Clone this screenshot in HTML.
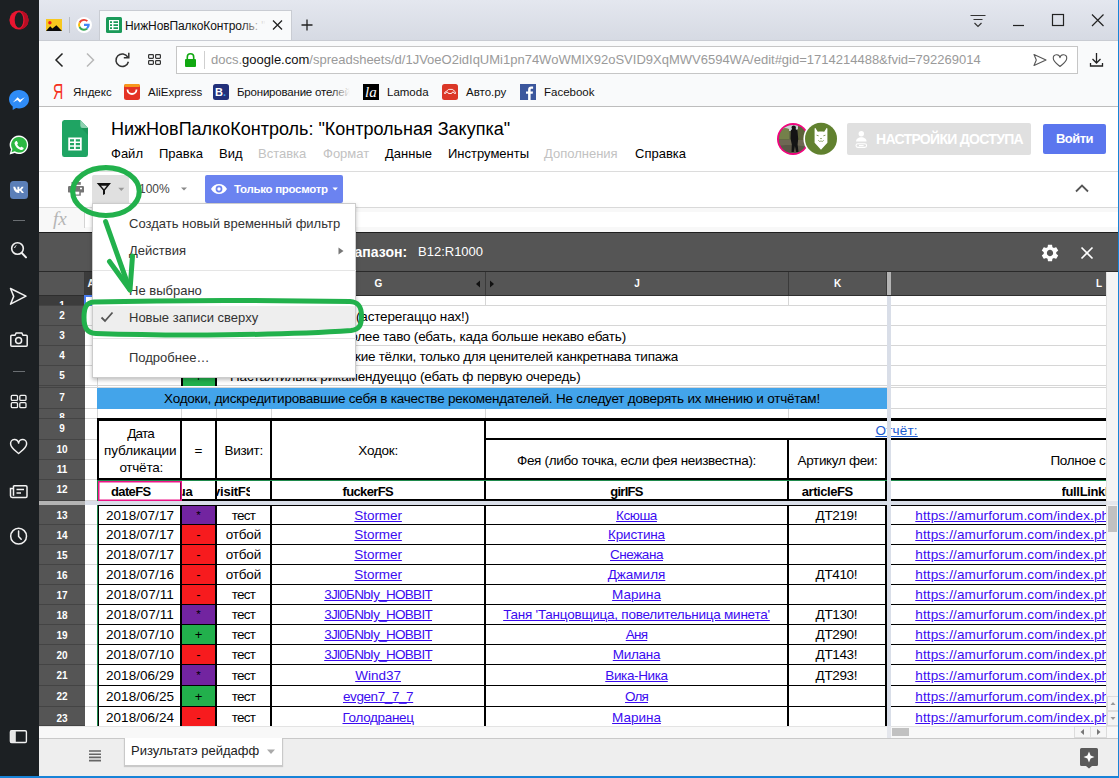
<!DOCTYPE html>
<html lang="ru"><head><meta charset="utf-8"><title>НижНовПалкоКонтроль: "Контрольная Закупка"</title>
<style>
*{box-sizing:border-box;margin:0;padding:0}
html,body{width:1119px;height:778px;overflow:hidden;background:#fff}
body{position:relative;font-family:"Liberation Sans",sans-serif;font-size:13px;color:#000}
.abs{position:absolute}
svg{position:absolute;overflow:visible}
/* sidebar */
#side{position:absolute;left:0;top:0;width:39px;height:778px;background:#1c2023}
/* tab bar */
#tabbar{position:absolute;left:39px;top:0;width:1080px;height:40px;background:linear-gradient(#e4e7ef,#d6dae3)}
#tab{position:absolute;left:99px;top:10px;width:193px;height:31px;background:#f9fafb;border:1px solid #c9ccd3;border-bottom:none}
#tabtitle{position:absolute;left:125px;top:17px;width:140px;height:18px;font-size:12px;letter-spacing:-.1px;line-height:18px;color:#111;white-space:nowrap;overflow:hidden}
#tabfade{position:absolute;left:240px;top:14px;width:26px;height:24px;background:linear-gradient(90deg,rgba(249,250,251,0),#f9fafb)}
#navrow{position:absolute;left:39px;top:40px;width:1080px;height:37px;background:#f9fafb;border-top:1px solid #c9ccd3}
#addr{position:absolute;left:176px;top:46px;width:902px;height:28px;background:#fff;border:1px solid #c6c6c6}
#url{position:absolute;left:211px;top:50px;height:20px;line-height:20px;font-size:13px;color:#9a9a9a;white-space:nowrap}
#url b{font-weight:normal;color:#111}
#bm{position:absolute;left:39px;top:77px;width:1080px;height:30px;background:#f9fafb;border-bottom:1px solid #bdbdbd}
.bmt{position:absolute;top:83px;height:18px;line-height:18px;font-size:11.5px;color:#111;white-space:nowrap}
/* docs */
#title{position:absolute;left:111px;top:118px;height:22px;line-height:22px;font-size:18px;color:#000;white-space:nowrap}
.menu{position:absolute;top:145px;height:17px;line-height:17px;font-size:13px;color:#000;white-space:nowrap}
.menu.dis{color:#c2c2c2}
#hdrline{position:absolute;left:39px;top:171px;width:1080px;height:1px;background:#dcdcdc}
#tbline{position:absolute;left:39px;top:207px;width:1080px;height:1px;background:#d9d9d9}
#fbar{position:absolute;left:39px;top:208px;width:1080px;height:24px;background:#f8f8f8}
#fx{position:absolute;left:53px;top:208px;font-family:"Liberation Serif",serif;font-style:italic;font-size:19px;line-height:22px;color:#b5b5b5}
#share{position:absolute;left:847px;top:123px;width:184px;height:32px;background:#e0e0e0;border-radius:2px;color:#fff;font-weight:bold;font-size:14px;letter-spacing:-.7px;line-height:32px;white-space:nowrap}
#login{position:absolute;left:1043px;top:124px;width:63px;height:30px;background:#5b76ee;border-radius:2px;color:#fff;font-weight:bold;font-size:13px;letter-spacing:-.5px;line-height:30px;text-align:center}
#viewbtn{position:absolute;left:205px;top:175px;width:138px;height:28px;background:#6b83f0;border-radius:2px;color:#fff;font-weight:bold;font-size:11.5px;letter-spacing:-.3px;line-height:28px;white-space:nowrap}
#filtbtn{position:absolute;left:92px;top:175px;width:37px;height:28px;background:#e0e0e0;border-radius:2px 2px 0 0}
/* filter bar & headers */
#filterbar{position:absolute;left:39px;top:232px;width:1080px;height:40px;background:#555;border-top:1px solid #1f1f1f;border-bottom:1px solid #2a2a2a}
#colhdr{position:absolute;left:39px;top:272px;width:1067px;height:24px;background:#555}
.ch{position:absolute;top:272px;height:23px;line-height:23px;font-size:10px;font-weight:bold;color:#fff;text-align:center;border-right:1px solid #3a3a3a}
.rh{position:absolute;left:39px;width:46px;background:#555;color:#fff;font-size:10px;font-weight:bold;text-align:center;border-bottom:1px solid #444;overflow:hidden}
/* grid */
#grid{position:absolute;left:85px;top:296px;width:1021px;height:430px;background:#fff;overflow:hidden}
.hl{position:absolute;height:1px;background:#d4d4d4}
.vl{position:absolute;width:1px;background:#d4d4d4}
.bk{position:absolute;background:#000}
.c{position:absolute;font-size:13px;white-space:nowrap;text-align:center;color:#000;overflow:hidden}
.c a,.lnk{color:#3b0bf0;text-decoration:underline}
.cb{font-weight:bold}
/* menu */
#dd{position:absolute;left:92px;top:203px;width:264px;height:175px;background:#fff;border:1px solid #ccc;box-shadow:0 2px 4px rgba(0,0,0,.25)}
.mi{position:absolute;left:36px;height:17px;line-height:17px;font-size:13px;color:#333;white-space:nowrap}
/* bottom */
#hscroll{position:absolute;left:39px;top:726px;width:1080px;height:12px;background:#f8f8f8}
#bottom{position:absolute;left:39px;top:738px;width:1080px;height:40px;background:#eee;border-top:1px solid #c9c9c9}
#sheettab{position:absolute;left:124px;top:738px;width:159px;height:28px;background:#fff;border:1px solid #c9c9c9;border-top:none;box-shadow:0 1px 1px rgba(0,0,0,.15);font-size:13px;line-height:26px;color:#222;white-space:nowrap}
#winb{position:absolute;left:0;top:776px;width:1119px;height:2px;background:#1883d7}
#winr{position:absolute;left:1118px;top:0;width:1px;height:778px;background:#1883d7}

</style></head>
<body>
<!-- Opera sidebar -->
<div id="side">
<svg width="39" height="778" viewBox="0 0 39 778" fill="none">
 <!-- opera -->
 <circle cx="19" cy="20" r="9.600" fill="#ea1530"/>
 <path d="M19 10.400a9.600 9.600 0 0 1 0 19.200c3.500-1.500 5.500-5 5.500-9.600s-2-8.100-5.500-9.600z" fill="#b50d24"/>
 <ellipse cx="19" cy="20" rx="4.300" ry="7.700" fill="#1c2023"/>
 <!-- messenger -->
 <path d="M19 90c-5.6 0-10 4.1-10 9.3 0 2.9 1.4 5.4 3.7 7.100v3.600l3.400-1.900c.9.300 1.900.400 2.900.400 5.600 0 10-4.100 10-9.300S24.600 90 19 90z" fill="#2f8cf7"/>
 <path d="M12.800 102.400l4.800-5.100 2.600 2.500 4.600-2.500-4.800 5.100-2.600-2.500z" fill="#fff"/>
 <!-- whatsapp -->
 <path d="M19 135.500a9.300 9.300 0 0 0-8 14l-1.400 4.900 5.100-1.300A9.300 9.300 0 1 0 19 135.500z" fill="#fff"/>
 <path d="M19 137a7.800 7.800 0 0 0-6.600 12l-.9 3.200 3.300-.9A7.800 7.800 0 1 0 19 137z" fill="#2cb742"/>
 <path d="M15.800 141.300c.5-.5 1.100-.3 1.300.1l.8 1.600c.1.400 0 .7-.3 1l-.4.500c.7 1.400 1.700 2.400 3.100 3.100l.6-.6c.3-.3.700-.3 1-.1l1.500.9c.4.300.4.800.1 1.200-.7.900-1.600 1.300-2.700 1-3-.8-5.500-3.200-6.200-6.200-.2-1 .3-1.800 1.200-2.500z" fill="#fff"/>
 <!-- vk -->
 <rect x="10" y="181" width="18" height="18" rx="3.500" fill="#5b7fb8"/>
 <path d="M13.200 186.800h2c.6 1.600 1.400 3 2.200 3.300v-3.300h1.900v2.400c.9-.2 1.700-1.300 2.300-2.400h1.900c-.4 1.400-1.300 2.500-2.200 3.200 1 .6 2 1.600 2.600 3h-2.100c-.5-1.100-1.400-2-2.500-2.200v2.200h-.9c-2.900 0-4.600-2.200-5.200-6.200z" fill="#fff"/>
 <!-- sep -->
 <rect x="13" y="220" width="12" height="1" fill="#6a6e72"/>
 <!-- search -->
 <circle cx="17.500" cy="248.500" r="5.800" stroke="#f2f2f2" stroke-width="1.600"/>
 <path d="M21.800 253l4.200 4.400" stroke="#f2f2f2" stroke-width="2" stroke-linecap="round"/>
 <path d="M14.600 248a3 3 0 0 1 1.800-2.500" stroke="#f2f2f2" stroke-width="1"/>
 <!-- send -->
 <path d="M10.500 288.500l15.500 7.700-15.500 8 3.200-7.800z" stroke="#f2f2f2" stroke-width="1.500" stroke-linejoin="round"/>
 <!-- camera -->
 <path d="M11.800 335.300h3.200l1.200-2.300h5.600l1.200 2.300h3.200c.6 0 1 .4 1 1v9c0 .6-.4 1-1 1H11.800c-.6 0-1-.4-1-1v-9c0-.6.4-1 1-1z" stroke="#f2f2f2" stroke-width="1.500"/>
 <circle cx="18.600" cy="340.600" r="3" stroke="#f2f2f2" stroke-width="1.500"/>
 <!-- sep -->
 <rect x="13" y="371" width="12" height="1" fill="#6a6e72"/>
 <!-- speed dial -->
 <g stroke="#f2f2f2" stroke-width="1.300">
 <rect x="11.300" y="395.400" width="6.200" height="5" rx="1"/><rect x="19.800" y="395.400" width="6.200" height="5" rx="1"/>
 <rect x="11.300" y="402.700" width="6.200" height="5" rx="1"/><rect x="19.800" y="402.700" width="6.200" height="5" rx="1"/>
 </g>
 <!-- heart -->
 <path d="M18.600 453.500c-4-3.300-8-6-8-9.600a4 4 0 0 1 8-.8 4 4 0 0 1 8 .8c0 3.600-4 6.300-8 9.600z" stroke="#f2f2f2" stroke-width="1.500" stroke-linejoin="round"/>
 <!-- news -->
 <path d="M13.500 485.700h12.300c.7 0 1.200.5 1.200 1.200v9.300c0 .7-.5 1.200-1.200 1.200H12.200c-1 0-1.700-.8-1.700-1.700v-7.200h3" stroke="#f2f2f2" stroke-width="1.500"/>
 <path d="M13.500 485.700v10.100" stroke="#f2f2f2" stroke-width="1.500"/>
 <path d="M16.500 489.500h7.500M16.500 493h4.500" stroke="#f2f2f2" stroke-width="1.500"/>
 <!-- clock -->
 <circle cx="18.600" cy="536.200" r="7.900" stroke="#f2f2f2" stroke-width="1.500"/>
 <path d="M18.600 531v5.500l2.600 2.800" stroke="#f2f2f2" stroke-width="1.500" stroke-linecap="round"/>
 <!-- toggle -->
 <rect x="10.400" y="730.700" width="16" height="11.800" rx="1.200" stroke="#f2f2f2" stroke-width="1.400"/>
 <rect x="10.400" y="730.700" width="5.400" height="11.800" fill="#e6e6e6"/>
</svg>
</div>

<!-- tab bar -->
<div id="tabbar"></div>
<div id="tab"></div>
<svg style="left:39px;top:0" width="1080" height="40" viewBox="39 0 1080 40" fill="none">
 <!-- pinned: picture icon -->
 <rect x="46" y="19" width="16" height="12" fill="#f7c81e"/>
 <path d="M46 31l4.200-4.700 2.200 2.100 4-3.100 5.600 5.700z" fill="#0a0a0a"/>
 <circle cx="49.900" cy="22.800" r="1.700" fill="#ee1c1c"/>
 <rect x="69" y="17" width="1" height="16" fill="#b9bcc4"/>
 <!-- google G -->
 <circle cx="84" cy="25" r="8" fill="#fff"/>
 <g transform="translate(84 24.800) scale(.84) translate(-84 -25)">
 <path d="M84 20.300c1.300 0 2.400.5 3.200 1.200l1.600-1.600A6.800 6.800 0 0 0 84 18a7 7 0 0 0-6.200 3.800l1.900 1.500A4.700 4.700 0 0 1 84 20.300z" fill="#ea4335"/>
 <path d="M79.300 25c0-.6.100-1.200.4-1.700l-1.900-1.500a7 7 0 0 0 0 6.400l1.900-1.500c-.3-.5-.4-1.100-.4-1.700z" fill="#fbbc05"/>
 <path d="M84 29.700c-2 0-3.700-1.300-4.300-3l-1.900 1.500A7 7 0 0 0 84 32c1.800 0 3.400-.6 4.600-1.700l-1.800-1.500c-.7.600-1.700.9-2.800.9z" fill="#34a853"/>
 <path d="M90.800 25c0-.5 0-.9-.1-1.300H84v2.600h3.800c-.2.900-.6 1.600-1.300 2.100l1.800 1.500c1.500-1.300 2.500-3 2.500-4.900z" fill="#4285f4"/>
 </g>
 <!-- sheets favicon -->
 <rect x="106" y="17" width="16" height="16" rx="1.500" fill="#1b9a59"/>
 <path d="M109 20h10v10.200h-10z" fill="#fff"/>
 <path d="M110 21.300h2v1.700h-2zM113.500 21.300h4.500v1.700h-4.500zM110 24.300h2v1.700h-2zM113.500 24.300h4.500v1.700h-4.500zM110 27.300h2v1.700h-2zM113.500 27.300h4.500v1.700h-4.500z" fill="#1b9a59"/>
 <!-- close x -->
 <path d="M273 20.500l9 9M282 20.500l-9 9" stroke="#222" stroke-width="1.300"/>
 <!-- plus -->
 <path d="M307 19.500v11M301.500 25h11" stroke="#222" stroke-width="1.300"/>
 <!-- window controls -->
 <path d="M970.500 15.500h15M973.500 19.500h9" stroke="#333" stroke-width="1.200"/>
 <path d="M974.500 23l3.500 3.500 3.500-3.500" stroke="#333" stroke-width="1.200"/>
 <path d="M1013 25.500h11" stroke="#222" stroke-width="1.200"/>
 <rect x="1052.500" y="14.500" width="11" height="11" stroke="#222" stroke-width="1.200"/>
 <path d="M1092 14.500l11.500 11.500M1103.500 14.500l-11.500 11.500" stroke="#222" stroke-width="1.200"/>
</svg>
<div id="tabtitle">НижНовПалкоКонтроль: "Контрольная Закупка"</div>
<div id="tabfade"></div>

<!-- nav row -->
<div id="navrow"></div>
<div id="addr"></div>
<svg style="left:39px;top:40px" width="1080" height="37" viewBox="39 40 1080 37" fill="none">
 <path d="M62.500 53.500l-6.500 6.500 6.500 6.500" stroke="#222" stroke-width="1.500"/>
 <path d="M87 53.500l6.500 6.500-6.500 6.500" stroke="#b8b8b8" stroke-width="1.500"/>
 <path d="M127.800 57.200a6.300 6.300 0 1 0 .6 4.500" stroke="#333" stroke-width="1.500"/>
 <path d="M128.800 52.800v5h-5" stroke="#333" stroke-width="1.500"/>
 <g stroke="#333" stroke-width="1.200">
 <rect x="148.600" y="54.600" width="4.800" height="3.800" rx=".8"/><rect x="155.600" y="54.600" width="4.800" height="3.800" rx=".8"/>
 <rect x="148.600" y="60.600" width="4.800" height="3.800" rx=".8"/><rect x="155.600" y="60.600" width="4.800" height="3.800" rx=".8"/>
 </g>
 <!-- lock -->
 <rect x="185" y="59" width="11" height="8" rx="1" fill="#11a811"/>
 <path d="M187.300 59.500v-2.600a3.200 3.200 0 0 1 6.400 0v2.600" stroke="#11a811" stroke-width="1.600"/>
 <rect x="204" y="51" width="1" height="18" fill="#cfcfcf"/>
 <!-- send, heart, download -->
 <path d="M1034 54.500l12 5.500-12 5.500 2.300-5.500z" stroke="#555" stroke-width="1.100" stroke-linejoin="round"/>
 <path d="M1060 66.500c-3.300-2.700-6.700-5-6.700-8a3.300 3.300 0 0 1 6.700-.7 3.300 3.300 0 0 1 6.700.7c0 3-3.400 5.300-6.700 8z" stroke="#555" stroke-width="1.100" stroke-linejoin="round"/>
 <path d="M1096.500 53v9.500M1092.500 59l4 4 4-4M1090.500 63v3h12v-3" stroke="#222" stroke-width="1.300"/>
</svg>
<div id="url">docs.<b>google.com</b>/spreadsheets/d/1JVoeO2idIqUMi1pn74WoWMIX92oSVID9XqMWV6594WA/edit#gid=1714214488&amp;fvid=792269014</div>

<!-- bookmarks -->
<div id="bm"></div>
<svg style="left:39px;top:77px" width="1080" height="30" viewBox="39 77 1080 30" fill="none">
 <rect x="124" y="84" width="16" height="16" rx="2.500" fill="#e43225"/>
 <rect x="124" y="84" width="16" height="3" rx="1.500" fill="#f7971d"/>
 <path d="M127.500 89.500a4.500 4.500 0 0 0 9 0" stroke="#fff" stroke-width="1.800"/>
 <rect x="213" y="84" width="16" height="16" rx="2.500" fill="#22307a"/>
 <rect x="363" y="84" width="16" height="16" fill="#000"/>
 <rect x="442" y="84" width="16" height="16" rx="2.500" fill="#db3727"/>
 <path d="M444.500 93.200c0-1 .8-1.500 1.800-1.700l1.500-1.600c.4-.4.800-.5 1.300-.5h3c.6 0 1 .2 1.400.6l1 1.300c.7.200 1 .7 1 1.400v.8h-1.100a1.400 1.400 0 0 0-2.800 0h-3.200a1.400 1.400 0 0 0-2.800 0h-1.100z" stroke="#fff" stroke-width=".9"/>
 <rect x="520" y="84" width="16" height="16" fill="#3b579d"/>
 <path d="M530.600 100v-6.200h2.100l.3-2.400h-2.400v-1.500c0-.7.200-1.200 1.200-1.200h1.300v-2.100c-.2 0-1-.1-1.900-.1-1.900 0-3.100 1.100-3.100 3.200v1.700H526v2.400h2.100v6.200z" fill="#fff"/>
</svg>
<div class="bmt" style="left:52.500px;top:79.500px;font-size:21.500px;line-height:24px;color:#f5301c;font-weight:normal;transform:scaleX(.66);transform-origin:0 0">Я</div>
<div class="bmt" style="left:73px">Яндекс</div>
<div class="bmt" style="left:148px">AliExpress</div>
<div class="bmt" style="left:215px;top:84px;font-size:11px;line-height:16px;color:#fff;font-weight:bold">B<span style="color:#3ea3e6">.</span></div>
<div class="bmt" style="left:237px;width:113px;overflow:hidden;letter-spacing:-.2px">Бронирование отелей</div>
<div class="abs" style="left:330px;top:80px;width:22px;height:24px;background:linear-gradient(90deg,rgba(249,250,251,0),#f9fafb 90%)"></div>
<div class="bmt" style="left:365px;top:83px;font-family:'Liberation Serif',serif;font-style:italic;font-size:15px;color:#fff">la</div>
<div class="bmt" style="left:387px">Lamoda</div>
<div class="bmt" style="left:466px">Авто.ру</div>
<div class="bmt" style="left:544px">Facebook</div>
<!-- docs header -->
<svg style="left:62px;top:120px" width="26" height="37" viewBox="0 0 27 37" preserveAspectRatio="none" fill="none">
 <path d="M2.500 0h16.500l8 8v26.500a2.500 2.500 0 0 1-2.500 2.500h-22a2.500 2.500 0 0 1-2.500-2.500v-32a2.500 2.500 0 0 1 2.500-2.500z" fill="#1fa463"/>
 <path d="M19 0l8 8h-5.500a2.500 2.500 0 0 1-2.500-2.500z" fill="#8ed1b1"/>
 <path d="M27 8v7l-7-7z" fill="#188c53" opacity=".6"/>
 <path d="M6.500 17.500h14v13h-14z" fill="#fff"/>
 <path d="M8.300 19.300h4.200v2.300H8.300zM14.300 19.300h4.400v2.300h-4.400zM8.300 23h4.200v2.300H8.300zM14.300 23h4.400v2.300h-4.400zM8.300 26.700h4.200v2.200H8.300zM14.300 26.700h4.400v2.200h-4.400z" fill="#1fa463"/>
</svg>
<div id="title">НижНовПалкоКонтроль: "Контрольная Закупка"</div>
<div class="menu" style="left:111px">Файл</div>
<div class="menu" style="left:159px">Правка</div>
<div class="menu" style="left:219px">Вид</div>
<div class="menu dis" style="left:258px">Вставка</div>
<div class="menu dis" style="left:323px">Формат</div>
<div class="menu" style="left:385px">Данные</div>
<div class="menu" style="left:448px">Инструменты</div>
<div class="menu dis" style="left:544px">Дополнения</div>
<div class="menu" style="left:635px">Справка</div>

<!-- avatars -->
<div class="abs" style="left:777px;top:122.800px;width:32px;height:32px;border-radius:50%;background:#f0057e"></div>
<div class="abs" style="left:779.100px;top:124.900px;width:27.800px;height:27.800px;border-radius:50%;overflow:hidden;background:#636b45">
<svg style="left:-1.100px;top:-.900px" width="30" height="30" viewBox="778 124 30 30" fill="none">
  <path d="M782 124h16v5c-3 1.500-5 2-8 2s-6-.500-8-2.500z" fill="#c9d0d2"/>
  <path d="M778 131c3-3 7-4 11-2v10h-11z" fill="#74804a"/>
  <path d="M798 127c3-1 7 0 10 3v10h-10z" fill="#5c6238"/>
  <rect x="778" y="140" width="30" height="14" fill="#6e6753"/>
  <path d="M778 146c8-2 20-1 30 1v7h-30z" fill="#5a5646"/>
  <path d="M791.500 127.500c0-1.300 1-2 2.200-2s2.200.800 2.200 2l-.200 1.800 1.800 1.200.700 8.500-.600 5.500.900 7.500h-2.300l-1.300-6-1.100 6h-2.300l.300-7.500-1.300-6 .300-8 1.200-1.500z" fill="#141414"/>
</svg>
</div>
<svg style="left:800px;top:118px" width="42" height="42" viewBox="800 118 42 42" fill="none">
 <circle cx="821" cy="138.800" r="17.600" fill="#fff"/>
 <circle cx="821" cy="138.800" r="16" fill="#61812f"/>
 <path d="M814.600 142.800v-13.800c0-1 .6-1.300 1.100-.5l2.100 3.300c2.100-.5 4.300-.5 6.400 0l2.100-3.300c.5-.8 1.100-.5 1.100.5v13.800l-6.400 6.900z" fill="#fff"/>
 <path d="M816.600 135.200l2 .6M825.400 135.200l-2 .6" stroke="#61812f" stroke-width=".8"/>
 <path d="M820 138h2l-1 1.300z" fill="#61812f"/>
 <path d="M818.300 140.300c.8 1.300 1.900 1.500 2.700.4.800 1.100 1.900.9 2.700-.4" stroke="#61812f" stroke-width=".7"/>
</svg>
<div id="share"><span style="position:absolute;left:29px;top:0">НАСТРОЙКИ ДОСТУПА</span></div>
<svg style="left:853px;top:129px" width="18" height="21" viewBox="853 129 18 21" fill="none">
 <circle cx="861.300" cy="133.800" r="2.700" fill="#fff"/>
 <path d="M856 141.600c0-2.800 2.400-4.400 5.300-4.400s5.300 1.600 5.300 4.400z" fill="#fff"/>
 <rect x="856" y="143.700" width="10.600" height="3.700" rx="1.850" stroke="#fff" stroke-width="1.100"/>
 <path d="M859 145.550h4.600" stroke="#fff" stroke-width="1.100"/>
</svg>
<div id="login">Войти</div>
<div id="hdrline"></div>

<!-- toolbar -->
<div id="filtbtn"></div>
<svg style="left:66px;top:176px" width="70" height="26" viewBox="66 176 70 26" fill="none">
 <!-- print -->
 <rect x="71.500" y="182" width="9.300" height="2.800" fill="#757575"/>
 <rect x="68" y="186" width="16" height="6.600" rx="1.200" fill="#757575"/>
 <rect x="71.500" y="190.500" width="9.300" height="5.200" fill="#757575"/>
 <rect x="73" y="191.700" width="6.300" height="2.800" fill="#fff"/>
 <rect x="80" y="187.700" width="2" height="1.600" fill="#fff"/>
 <!-- filter funnel -->
 <path d="M96.700 183h14.300l-6 7.200v3.800l-2 1v-4.800z" fill="#111"/>
 <path d="M101 185.800h5.800l-2.800 3.400z" fill="#e0e0e0"/>
 <path d="M118.300 187.800l3 3.200 3-3.200z" fill="#999"/>
 <path d="M181 187.500l3 3 3-3z" fill="#8a8a8a"/>
</svg>
<div class="abs" style="left:139px;top:181px;font-size:12px;line-height:16px;color:#444">100%</div>
<div id="viewbtn"><span style="position:absolute;left:29px;top:0">Только просмотр</span></div>
<svg style="left:209px;top:181px" width="132" height="16" viewBox="209 181 132 16" fill="none">
 <path d="M211 189c2-3.300 4.700-5 8-5s6 1.700 8 5c-2 3.300-4.700 5-8 5s-6-1.700-8-5z" fill="#fff"/>
 <circle cx="219" cy="189" r="3.400" fill="#6b83f0"/>
 <circle cx="219" cy="189" r="1.700" fill="#fff"/>
 <path d="M332.500 187.500l2.700 3 2.700-3z" fill="#fff"/>
</svg>
<svg style="left:1073px;top:182px" width="18" height="12" viewBox="0 0 18 12" fill="none">
 <path d="M3 9.500l6-6 6 6" stroke="#555" stroke-width="1.800"/>
</svg>
<div id="tbline"></div>

<!-- formula bar -->
<div id="fbar">
 <div class="abs" style="left:46px;top:4px;width:1034px;height:15px;background:#fff"></div>
 <div class="abs" style="left:45px;top:2px;width:1px;height:18px;background:#d4d4d4"></div>
</div>
<div id="fx">fx</div>

<!-- filter bar -->
<div id="filterbar"></div>
<div class="abs" style="left:336px;top:243px;font-size:14px;line-height:18px;font-weight:bold;color:#fff;white-space:nowrap">Диапазон:</div>
<div class="abs" style="left:418px;top:243px;font-size:13px;line-height:18px;color:#fff;white-space:nowrap">B12:R1000</div>
<svg style="left:1038px;top:241px" width="64" height="24" viewBox="1038 241 64 24" fill="none">
 <path fill="#fff" transform="translate(1039.560 242.560) scale(.87)" d="M19.140 12.940c.040-.300.060-.610.060-.940 0-.320-.020-.640-.070-.940l2.030-1.580c.180-.140.230-.410.120-.610l-1.920-3.320c-.120-.220-.370-.290-.590-.220l-2.390.960c-.500-.380-1.030-.700-1.620-.940l-.360-2.540c-.040-.240-.240-.410-.480-.410h-3.840c-.240 0-.430.170-.470.410l-.360 2.540c-.590.240-1.130.570-1.620.940l-2.390-.960c-.220-.080-.470 0-.590.220l-1.910 3.320c-.120.210-.080.470.120.610l2.030 1.580c-.050.300-.090.630-.090.940s.020.640.070.940l-2.030 1.580c-.180.140-.230.410-.120.610l1.920 3.320c.120.220.370.290.590.220l2.390-.960c.500.380 1.030.700 1.620.940l.360 2.540c.050.240.240.410.480.410h3.840c.240 0 .440-.170.470-.410l.360-2.540c.590-.240 1.130-.560 1.620-.940l2.390.960c.220.080.470 0 .590-.220l1.920-3.320c.120-.220.070-.470-.120-.610l-2.010-1.580zm-7.140 2.660c-1.980 0-3.600-1.620-3.600-3.600s1.620-3.600 3.600-3.600 3.600 1.620 3.600 3.600-1.620 3.600-3.600 3.600z"/>
 <path d="M1081.500 247.500l11 11M1092.500 247.500l-11 11" stroke="#fff" stroke-width="1.700"/>
</svg>
<div id="grid">
<div class="abs" style="left:0px;top:9px;width:1021px;height:1px;background:#d6d6d6;"></div>
<div class="abs" style="left:0px;top:29px;width:1021px;height:1px;background:#d6d6d6;"></div>
<div class="abs" style="left:0px;top:49px;width:1021px;height:1px;background:#d6d6d6;"></div>
<div class="abs" style="left:0px;top:69px;width:1021px;height:1px;background:#d6d6d6;"></div>
<div class="abs" style="left:0px;top:89px;width:1021px;height:1px;background:#d6d6d6;"></div>
<div class="abs" style="left:0px;top:91px;width:1021px;height:1px;background:#d6d6d6;"></div>
<div class="abs" style="left:0px;top:112px;width:1021px;height:1px;background:#d6d6d6;"></div>
<div class="abs" style="left:0px;top:122px;width:1021px;height:1px;background:#d6d6d6;"></div>
<div class="abs" style="left:96px;top:0px;width:1px;height:10px;background:#d6d6d6;"></div>
<div class="abs" style="left:96px;top:113px;width:1px;height:10px;background:#d6d6d6;"></div>
<div class="abs" style="left:131px;top:0px;width:1px;height:10px;background:#d6d6d6;"></div>
<div class="abs" style="left:131px;top:113px;width:1px;height:10px;background:#d6d6d6;"></div>
<div class="abs" style="left:186px;top:0px;width:1px;height:10px;background:#d6d6d6;"></div>
<div class="abs" style="left:186px;top:113px;width:1px;height:10px;background:#d6d6d6;"></div>
<div class="abs" style="left:400px;top:0px;width:1px;height:10px;background:#d6d6d6;"></div>
<div class="abs" style="left:400px;top:113px;width:1px;height:10px;background:#d6d6d6;"></div>
<div class="abs" style="left:703px;top:0px;width:1px;height:10px;background:#d6d6d6;"></div>
<div class="abs" style="left:703px;top:113px;width:1px;height:10px;background:#d6d6d6;"></div>
<div class="abs" style="left:12px;top:0px;width:1px;height:430px;background:#d6d6d6;"></div>
<div class="abs" style="left:0px;top:143px;width:12px;height:1px;background:#d6d6d6;"></div>
<div class="abs" style="left:0px;top:163px;width:12px;height:1px;background:#d6d6d6;"></div>
<div class="abs" style="left:0px;top:183px;width:12px;height:1px;background:#d6d6d6;"></div>
<div class="abs" style="left:0px;top:204px;width:12px;height:1px;background:#d6d6d6;"></div>
<div class="abs" style="left:0px;top:228px;width:12px;height:1px;background:#d6d6d6;"></div>
<div class="abs" style="left:0px;top:248px;width:12px;height:1px;background:#d6d6d6;"></div>
<div class="abs" style="left:0px;top:268px;width:12px;height:1px;background:#d6d6d6;"></div>
<div class="abs" style="left:0px;top:288px;width:12px;height:1px;background:#d6d6d6;"></div>
<div class="abs" style="left:0px;top:308px;width:12px;height:1px;background:#d6d6d6;"></div>
<div class="abs" style="left:0px;top:328px;width:12px;height:1px;background:#d6d6d6;"></div>
<div class="abs" style="left:0px;top:348px;width:12px;height:1px;background:#d6d6d6;"></div>
<div class="abs" style="left:0px;top:368px;width:12px;height:1px;background:#d6d6d6;"></div>
<div class="abs" style="left:0px;top:389px;width:12px;height:1px;background:#d6d6d6;"></div>
<div class="abs" style="left:0px;top:410px;width:12px;height:1px;background:#d6d6d6;"></div>
<div class="abs" style="left:96px;top:10px;width:36px;height:20px;background:#000;"></div>
<div class="abs" style="left:98px;top:10px;width:32px;height:20px;background:#7224a0;"></div>
<div class="c " style="left:98.5px;top:12.7px;width:30px;height:16px;line-height:16px;font-size:13.5px;">*</div>
<div class="c " style="right:637px;top:12.7px;height:16px;line-height:16px;text-align:right;font-size:13.5px;letter-spacing:-0.166px;">Ни рикамендуеццо (астерегаццо нах!)</div>
<div class="abs" style="left:96px;top:30px;width:36px;height:20px;background:#000;"></div>
<div class="abs" style="left:98px;top:30px;width:32px;height:20px;background:#f71b1e;"></div>
<div class="c " style="left:98.5px;top:32.7px;width:30px;height:16px;line-height:16px;font-size:13.5px;">-</div>
<div class="c " style="right:480px;top:32.7px;height:16px;line-height:16px;text-align:right;font-size:13.5px;letter-spacing:-0.197px;">Ни рикамендуеццо, ни более таво (ебать, када больше некаво ебать)</div>
<div class="abs" style="left:96px;top:50px;width:36px;height:20px;background:#000;"></div>
<div class="abs" style="left:98px;top:50px;width:32px;height:20px;background:#f2e53a;"></div>
<div class="c " style="left:98.5px;top:52.7px;width:30px;height:16px;line-height:16px;font-size:13.5px;">~</div>
<div class="c " style="right:428px;top:52.7px;height:16px;line-height:16px;text-align:right;font-size:13.5px;letter-spacing:-.25px;">Спицыфическые такие тёлки, только для ценителей канкретнава типажа</div>
<div class="abs" style="left:96px;top:70px;width:36px;height:20px;background:#000;"></div>
<div class="abs" style="left:98px;top:70px;width:32px;height:20px;background:#22b04c;"></div>
<div class="c " style="left:98.5px;top:72.7px;width:30px;height:16px;line-height:16px;font-size:13.5px;">+</div>
<div class="c " style="right:525.5px;top:72.7px;height:16px;line-height:16px;text-align:right;font-size:13.5px;letter-spacing:-0.142px;">Пастаятильна рикамендуеццо (ебать ф первую очередь)</div>
<div class="abs" style="left:12px;top:92px;width:790px;height:21px;background:#43a4ea;"></div>
<div class="c " style="left:27px;top:95px;width:760px;height:16px;line-height:16px;font-size:13.5px;letter-spacing:-0.219px;">Ходоки, дискредитировавшие себя в качестве рекомендателей. Не следует доверять их мнению и отчётам!</div>
<div class="abs" style="left:12px;top:122px;width:1009px;height:3px;background:#000;"></div>
<div class="abs" style="left:12px;top:122px;width:2px;height:62px;background:#000;"></div>
<div class="abs" style="left:95px;top:122px;width:2px;height:83px;background:#000;"></div>
<div class="abs" style="left:130px;top:122px;width:2px;height:83px;background:#000;"></div>
<div class="abs" style="left:185px;top:122px;width:2px;height:83px;background:#000;"></div>
<div class="abs" style="left:399px;top:122px;width:2px;height:83px;background:#000;"></div>
<div class="abs" style="left:702px;top:142px;width:2px;height:63px;background:#000;"></div>
<div class="abs" style="left:800px;top:142px;width:2px;height:63px;background:#000;"></div>
<div class="abs" style="left:399px;top:142px;width:640px;height:2px;background:#000;"></div>
<div class="abs" style="left:12px;top:182px;width:1009px;height:2px;background:#000;"></div>
<div class="abs" style="left:12px;top:184px;width:1009px;height:1px;background:#1f8a4c;"></div>
<div class="abs" style="left:96px;top:203px;width:940px;height:2px;background:#000;"></div>
<div class="c " style="left:15.6px;top:130px;width:80px;height:16px;line-height:16px;font-size:13.5px;letter-spacing:-0.777px;">Дата</div>
<div class="c " style="left:13.3px;top:147px;width:84px;height:16px;line-height:16px;font-size:13.5px;letter-spacing:-0.078px;">публикации</div>
<div class="c " style="left:16.2px;top:163.5px;width:80px;height:16px;line-height:16px;font-size:13.5px;letter-spacing:-0.233px;">отчёта:</div>
<div class="c " style="left:98.5px;top:147px;width:30px;height:16px;line-height:16px;font-size:13.5px;">=</div>
<div class="c " style="left:132.7px;top:147px;width:52px;height:16px;line-height:16px;font-size:13.5px;letter-spacing:-0.270px;">Визит:</div>
<div class="c " style="left:193.2px;top:147px;width:200px;height:16px;line-height:16px;font-size:13.5px;letter-spacing:-0.235px;">Ходок:</div>
<div class="c " style="left:761.6px;top:127px;width:100px;height:16px;line-height:16px;font-size:13.5px;letter-spacing:0.188px;"><span class="lnk" style="color:#1a5bd0">Отчёт:</span></div>
<div class="c " style="left:403.5px;top:156.5px;width:296px;height:16px;line-height:16px;font-size:13.5px;letter-spacing:-0.334px;">Фея (либо точка, если фея неизвестна):</div>
<div class="c " style="left:704.5px;top:156.5px;width:96px;height:16px;line-height:16px;font-size:13.5px;letter-spacing:-0.333px;">Артикул феи:</div>
<div class="c " style="left:965.5px;top:156.5px;height:16px;line-height:16px;text-align:left;font-size:13.5px;letter-spacing:-0.346px;">Полное содержание отчёта:</div>
<div class="abs" style="left:14px;top:186.5px;width:63.5px;height:18px;overflow:hidden"><div class="c cb" style="left:-68.25px;top:1px;width:200px;height:16px;line-height:16px;font-size:13px;letter-spacing:-0.674px">dateFS</div></div>
<div class="abs" style="left:97px;top:186.5px;width:11px;height:18px;overflow:hidden"><div class="c cb" style="left:-94.5px;top:1px;width:200px;height:16px;line-height:16px;font-size:13px;letter-spacing:-0.250px">equalFS</div></div>
<div class="abs" style="left:132px;top:186.5px;width:33px;height:18px;overflow:hidden"><div class="c cb" style="left:-83.5px;top:1px;width:200px;height:16px;line-height:16px;font-size:13px;letter-spacing:-0.250px">visitFS</div></div>
<div class="abs" style="left:187px;top:186.5px;width:191.5px;height:18px;overflow:hidden"><div class="c cb" style="left:-4.25px;top:1px;width:200px;height:16px;line-height:16px;font-size:13px;letter-spacing:-0.655px">fuckerFS</div></div>
<div class="abs" style="left:402px;top:186.5px;width:279px;height:18px;overflow:hidden"><div class="c cb" style="left:39.5px;top:1px;width:200px;height:16px;line-height:16px;font-size:13px;letter-spacing:-0.724px">girlFS</div></div>
<div class="abs" style="left:704px;top:186.5px;width:76.5px;height:18px;overflow:hidden"><div class="c cb" style="left:-61.75px;top:1px;width:200px;height:16px;line-height:16px;font-size:13px;letter-spacing:-0.436px">articleFS</div></div>
<div class="c cb" style="left:976.5px;top:187.5px;height:16px;line-height:16px;text-align:left;font-size:13px;letter-spacing:-0.340px;">fullLinkFS</div>
<div class="abs" style="left:13px;top:185px;width:84px;height:20px;border:1px solid #ec1487;box-shadow:inset 0 0 0 .5px #ec1487"></div>
<div class="abs" style="left:12px;top:185px;width:1px;height:20px;background:#1f8a4c;"></div>
<div class="abs" style="left:12px;top:209px;width:1px;height:222px;background:#1f8a4c;"></div>
<div class="abs" style="left:13px;top:209px;width:1px;height:222px;background:#000;"></div>
<div class="abs" style="left:95px;top:209px;width:2px;height:222px;background:#000;"></div>
<div class="abs" style="left:130px;top:209px;width:2px;height:222px;background:#000;"></div>
<div class="abs" style="left:185px;top:209px;width:2px;height:222px;background:#000;"></div>
<div class="abs" style="left:399px;top:209px;width:2px;height:222px;background:#000;"></div>
<div class="abs" style="left:702px;top:209px;width:2px;height:222px;background:#000;"></div>
<div class="abs" style="left:800px;top:209px;width:2px;height:222px;background:#000;"></div>
<div class="abs" style="left:14px;top:209px;width:1021px;height:1px;background:#000;"></div>
<div class="abs" style="left:97px;top:210px;width:33px;height:18px;background:#7224a0;"></div>
<div class="c " style="left:15px;top:211.8px;width:80px;height:16px;line-height:16px;font-size:13.5px;letter-spacing:0.042px;">2018/07/17</div>
<div class="c " style="left:98.5px;top:210.8px;width:30px;height:16px;line-height:16px;font-size:11.5px;">*</div>
<div class="c " style="left:132.4px;top:211.8px;width:52px;height:16px;line-height:16px;font-size:13.5px;letter-spacing:-0.746px;">тест</div>
<div class="c " style="left:188.1px;top:211.8px;width:210px;height:16px;line-height:16px;font-size:13.5px;letter-spacing:-0.074px;"><span class="lnk">Stormer</span></div>
<div class="c " style="left:402.5px;top:211.8px;width:298px;height:16px;line-height:16px;font-size:13.5px;letter-spacing:-0.456px;"><span class="lnk">Ксюша</span></div>
<div class="c " style="left:703.4px;top:211.8px;width:96px;height:16px;line-height:16px;font-size:13.5px;letter-spacing:-0.345px;">ДТ219!</div>
<div class="c " style="left:830.3px;top:211.8px;height:16px;line-height:16px;text-align:left;font-size:13.5px;letter-spacing:0.137px;"><span class="lnk">https://amurforum.com/index.php?/topic/</span></div>
<div class="abs" style="left:14px;top:228px;width:1021px;height:1px;background:#000;"></div>
<div class="abs" style="left:97px;top:229px;width:33px;height:19px;background:#f71b1e;"></div>
<div class="c " style="left:15px;top:231.3px;width:80px;height:16px;line-height:16px;font-size:13.5px;letter-spacing:0.042px;">2018/07/17</div>
<div class="c " style="left:98.5px;top:231.3px;width:30px;height:16px;line-height:16px;font-size:13px;">-</div>
<div class="c " style="left:132.4px;top:231.3px;width:52px;height:16px;line-height:16px;font-size:13.5px;letter-spacing:-0.197px;">отбой</div>
<div class="c " style="left:188.1px;top:231.3px;width:210px;height:16px;line-height:16px;font-size:13.5px;letter-spacing:-0.074px;"><span class="lnk">Stormer</span></div>
<div class="c " style="left:402.5px;top:231.3px;width:298px;height:16px;line-height:16px;font-size:13.5px;letter-spacing:-0.195px;"><span class="lnk">Кристина</span></div>
<div class="c " style="left:830.3px;top:231.3px;height:16px;line-height:16px;text-align:left;font-size:13.5px;letter-spacing:0.137px;"><span class="lnk">https://amurforum.com/index.php?/topic/</span></div>
<div class="abs" style="left:14px;top:248px;width:1021px;height:1px;background:#000;"></div>
<div class="abs" style="left:97px;top:249px;width:33px;height:19px;background:#f71b1e;"></div>
<div class="c " style="left:15px;top:251.3px;width:80px;height:16px;line-height:16px;font-size:13.5px;letter-spacing:0.042px;">2018/07/17</div>
<div class="c " style="left:98.5px;top:251.3px;width:30px;height:16px;line-height:16px;font-size:13px;">-</div>
<div class="c " style="left:132.4px;top:251.3px;width:52px;height:16px;line-height:16px;font-size:13.5px;letter-spacing:-0.197px;">отбой</div>
<div class="c " style="left:188.1px;top:251.3px;width:210px;height:16px;line-height:16px;font-size:13.5px;letter-spacing:-0.074px;"><span class="lnk">Stormer</span></div>
<div class="c " style="left:402.5px;top:251.3px;width:298px;height:16px;line-height:16px;font-size:13.5px;letter-spacing:-0.440px;"><span class="lnk">Снежана</span></div>
<div class="c " style="left:830.3px;top:251.3px;height:16px;line-height:16px;text-align:left;font-size:13.5px;letter-spacing:0.137px;"><span class="lnk">https://amurforum.com/index.php?/topic/</span></div>
<div class="abs" style="left:14px;top:268px;width:1021px;height:1px;background:#000;"></div>
<div class="abs" style="left:97px;top:269px;width:33px;height:19px;background:#f71b1e;"></div>
<div class="c " style="left:15px;top:271.3px;width:80px;height:16px;line-height:16px;font-size:13.5px;letter-spacing:0.042px;">2018/07/16</div>
<div class="c " style="left:98.5px;top:271.3px;width:30px;height:16px;line-height:16px;font-size:13px;">-</div>
<div class="c " style="left:132.4px;top:271.3px;width:52px;height:16px;line-height:16px;font-size:13.5px;letter-spacing:-0.197px;">отбой</div>
<div class="c " style="left:188.1px;top:271.3px;width:210px;height:16px;line-height:16px;font-size:13.5px;letter-spacing:-0.074px;"><span class="lnk">Stormer</span></div>
<div class="c " style="left:402.5px;top:271.3px;width:298px;height:16px;line-height:16px;font-size:13.5px;letter-spacing:-0.015px;"><span class="lnk">Джамиля</span></div>
<div class="c " style="left:703.4px;top:271.3px;width:96px;height:16px;line-height:16px;font-size:13.5px;letter-spacing:-0.345px;">ДТ410!</div>
<div class="c " style="left:830.3px;top:271.3px;height:16px;line-height:16px;text-align:left;font-size:13.5px;letter-spacing:0.137px;"><span class="lnk">https://amurforum.com/index.php?/topic/</span></div>
<div class="abs" style="left:14px;top:288px;width:1021px;height:1px;background:#000;"></div>
<div class="abs" style="left:97px;top:289px;width:33px;height:19px;background:#f71b1e;"></div>
<div class="c " style="left:15px;top:291.3px;width:80px;height:16px;line-height:16px;font-size:13.5px;letter-spacing:0.142px;">2018/07/11</div>
<div class="c " style="left:98.5px;top:291.3px;width:30px;height:16px;line-height:16px;font-size:13px;">-</div>
<div class="c " style="left:132.4px;top:291.3px;width:52px;height:16px;line-height:16px;font-size:13.5px;letter-spacing:-0.746px;">тест</div>
<div class="c " style="left:188.1px;top:291.3px;width:210px;height:16px;line-height:16px;font-size:13.5px;letter-spacing:-0.710px;"><span class="lnk">3Jl0БNbIy_HOBBIT</span></div>
<div class="c " style="left:402.5px;top:291.3px;width:298px;height:16px;line-height:16px;font-size:13.5px;letter-spacing:-0.020px;"><span class="lnk">Марина</span></div>
<div class="c " style="left:830.3px;top:291.3px;height:16px;line-height:16px;text-align:left;font-size:13.5px;letter-spacing:0.137px;"><span class="lnk">https://amurforum.com/index.php?/topic/</span></div>
<div class="abs" style="left:14px;top:308px;width:1021px;height:1px;background:#000;"></div>
<div class="abs" style="left:97px;top:309px;width:33px;height:19px;background:#7224a0;"></div>
<div class="c " style="left:15px;top:311.3px;width:80px;height:16px;line-height:16px;font-size:13.5px;letter-spacing:0.142px;">2018/07/11</div>
<div class="c " style="left:98.5px;top:310.3px;width:30px;height:16px;line-height:16px;font-size:11.5px;">*</div>
<div class="c " style="left:132.4px;top:311.3px;width:52px;height:16px;line-height:16px;font-size:13.5px;letter-spacing:-0.746px;">тест</div>
<div class="c " style="left:188.1px;top:311.3px;width:210px;height:16px;line-height:16px;font-size:13.5px;letter-spacing:-0.710px;"><span class="lnk">3Jl0БNbIy_HOBBIT</span></div>
<div class="c " style="left:402.5px;top:311.3px;width:298px;height:16px;line-height:16px;font-size:13.5px;letter-spacing:-0.239px;"><span class="lnk">Таня 'Танцовщица, повелительница минета'</span></div>
<div class="c " style="left:703.4px;top:311.3px;width:96px;height:16px;line-height:16px;font-size:13.5px;letter-spacing:-0.345px;">ДТ130!</div>
<div class="c " style="left:830.3px;top:311.3px;height:16px;line-height:16px;text-align:left;font-size:13.5px;letter-spacing:0.137px;"><span class="lnk">https://amurforum.com/index.php?/topic/</span></div>
<div class="abs" style="left:14px;top:328px;width:1021px;height:1px;background:#000;"></div>
<div class="abs" style="left:97px;top:329px;width:33px;height:19px;background:#22b04c;"></div>
<div class="c " style="left:15px;top:331.3px;width:80px;height:16px;line-height:16px;font-size:13.5px;letter-spacing:0.042px;">2018/07/10</div>
<div class="c " style="left:98.5px;top:331.3px;width:30px;height:16px;line-height:16px;font-size:13px;">+</div>
<div class="c " style="left:132.4px;top:331.3px;width:52px;height:16px;line-height:16px;font-size:13.5px;letter-spacing:-0.746px;">тест</div>
<div class="c " style="left:188.1px;top:331.3px;width:210px;height:16px;line-height:16px;font-size:13.5px;letter-spacing:-0.710px;"><span class="lnk">3Jl0БNbIy_HOBBIT</span></div>
<div class="c " style="left:402.5px;top:331.3px;width:298px;height:16px;line-height:16px;font-size:13.5px;letter-spacing:-0.760px;"><span class="lnk">Аня</span></div>
<div class="c " style="left:703.4px;top:331.3px;width:96px;height:16px;line-height:16px;font-size:13.5px;letter-spacing:-0.345px;">ДТ290!</div>
<div class="c " style="left:830.3px;top:331.3px;height:16px;line-height:16px;text-align:left;font-size:13.5px;letter-spacing:0.137px;"><span class="lnk">https://amurforum.com/index.php?/topic/</span></div>
<div class="abs" style="left:14px;top:348px;width:1021px;height:1px;background:#000;"></div>
<div class="abs" style="left:97px;top:349px;width:33px;height:19px;background:#f71b1e;"></div>
<div class="c " style="left:15px;top:351.3px;width:80px;height:16px;line-height:16px;font-size:13.5px;letter-spacing:0.042px;">2018/07/10</div>
<div class="c " style="left:98.5px;top:351.3px;width:30px;height:16px;line-height:16px;font-size:13px;">-</div>
<div class="c " style="left:132.4px;top:351.3px;width:52px;height:16px;line-height:16px;font-size:13.5px;letter-spacing:-0.746px;">тест</div>
<div class="c " style="left:188.1px;top:351.3px;width:210px;height:16px;line-height:16px;font-size:13.5px;letter-spacing:-0.710px;"><span class="lnk">3Jl0БNbIy_HOBBIT</span></div>
<div class="c " style="left:402.5px;top:351.3px;width:298px;height:16px;line-height:16px;font-size:13.5px;letter-spacing:-0.273px;"><span class="lnk">Милана</span></div>
<div class="c " style="left:703.4px;top:351.3px;width:96px;height:16px;line-height:16px;font-size:13.5px;letter-spacing:-0.345px;">ДТ143!</div>
<div class="c " style="left:830.3px;top:351.3px;height:16px;line-height:16px;text-align:left;font-size:13.5px;letter-spacing:0.137px;"><span class="lnk">https://amurforum.com/index.php?/topic/</span></div>
<div class="abs" style="left:14px;top:368px;width:1021px;height:1px;background:#000;"></div>
<div class="abs" style="left:97px;top:369px;width:33px;height:20px;background:#7224a0;"></div>
<div class="c " style="left:15px;top:371.8px;width:80px;height:16px;line-height:16px;font-size:13.5px;letter-spacing:0.042px;">2018/06/29</div>
<div class="c " style="left:98.5px;top:370.8px;width:30px;height:16px;line-height:16px;font-size:11.5px;">*</div>
<div class="c " style="left:132.4px;top:371.8px;width:52px;height:16px;line-height:16px;font-size:13.5px;letter-spacing:-0.746px;">тест</div>
<div class="c " style="left:188.1px;top:371.8px;width:210px;height:16px;line-height:16px;font-size:13.5px;letter-spacing:0.003px;"><span class="lnk">Wind37</span></div>
<div class="c " style="left:402.5px;top:371.8px;width:298px;height:16px;line-height:16px;font-size:13.5px;letter-spacing:-0.363px;"><span class="lnk">Вика-Ника</span></div>
<div class="c " style="left:703.4px;top:371.8px;width:96px;height:16px;line-height:16px;font-size:13.5px;letter-spacing:-0.345px;">ДТ293!</div>
<div class="c " style="left:830.3px;top:371.8px;height:16px;line-height:16px;text-align:left;font-size:13.5px;letter-spacing:0.137px;"><span class="lnk">https://amurforum.com/index.php?/topic/</span></div>
<div class="abs" style="left:14px;top:389px;width:1021px;height:1px;background:#000;"></div>
<div class="abs" style="left:97px;top:390px;width:33px;height:20px;background:#22b04c;"></div>
<div class="c " style="left:15px;top:392.8px;width:80px;height:16px;line-height:16px;font-size:13.5px;letter-spacing:0.042px;">2018/06/25</div>
<div class="c " style="left:98.5px;top:392.8px;width:30px;height:16px;line-height:16px;font-size:13px;">+</div>
<div class="c " style="left:132.4px;top:392.8px;width:52px;height:16px;line-height:16px;font-size:13.5px;letter-spacing:-0.746px;">тест</div>
<div class="c " style="left:188.1px;top:392.8px;width:210px;height:16px;line-height:16px;font-size:13.5px;letter-spacing:-0.413px;"><span class="lnk">evgen7_7_7</span></div>
<div class="c " style="left:402.5px;top:392.8px;width:298px;height:16px;line-height:16px;font-size:13.5px;letter-spacing:-0.849px;"><span class="lnk">Оля</span></div>
<div class="c " style="left:830.3px;top:392.8px;height:16px;line-height:16px;text-align:left;font-size:13.5px;letter-spacing:0.137px;"><span class="lnk">https://amurforum.com/index.php?/topic/</span></div>
<div class="abs" style="left:14px;top:410px;width:1021px;height:1px;background:#000;"></div>
<div class="abs" style="left:97px;top:411px;width:33px;height:20px;background:#f71b1e;"></div>
<div class="c " style="left:15px;top:413.8px;width:80px;height:16px;line-height:16px;font-size:13.5px;letter-spacing:0.042px;">2018/06/24</div>
<div class="c " style="left:98.5px;top:413.8px;width:30px;height:16px;line-height:16px;font-size:13px;">-</div>
<div class="c " style="left:132.4px;top:413.8px;width:52px;height:16px;line-height:16px;font-size:13.5px;letter-spacing:-0.746px;">тест</div>
<div class="c " style="left:188.1px;top:413.8px;width:210px;height:16px;line-height:16px;font-size:13.5px;letter-spacing:-0.325px;"><span class="lnk">Голодранец</span></div>
<div class="c " style="left:402.5px;top:413.8px;width:298px;height:16px;line-height:16px;font-size:13.5px;letter-spacing:-0.020px;"><span class="lnk">Марина</span></div>
<div class="c " style="left:830.3px;top:413.8px;height:16px;line-height:16px;text-align:left;font-size:13.5px;letter-spacing:0.137px;"><span class="lnk">https://amurforum.com/index.php?/topic/</span></div>
<div class="abs" style="left:0px;top:205px;width:1021px;height:4px;background:#d9dee8;"></div>
<div class="abs" style="left:802px;top:0px;width:4px;height:430px;background:#d9dee8;"></div>
</div>
<div id="colhdr"></div>
<div class="ch" style="left:85px;width:13px">A</div>
<div class="ch" style="left:98px;width:84px">B</div>
<div class="ch" style="left:182px;width:35px">C</div>
<div class="ch" style="left:217px;width:55px">D</div>
<div class="ch" style="left:272px;width:214px">G</div>
<div class="ch" style="left:486px;width:303px">J</div>
<div class="ch" style="left:789px;width:98px">K</div>
<div class="ch" style="left:891px;width:215px;text-align:right;padding-right:4px;border-right:none">L</div>
<div class="abs" style="left:39px;top:272px;width:46px;height:24px;background:#555;border-right:1px solid #3a3a3a"></div>
<div class="abs" style="left:887px;top:272px;width:4px;height:24px;background:#b4b4b4"></div>
<div class="abs" style="left:39px;top:295px;width:1067px;height:1px;background:#2e2e2e"></div>
<svg style="left:473px;top:279px" width="24" height="10" viewBox="0 0 24 10"><path d="M7 1.500v7l-4-3.500z" fill="#111"/><path d="M17 1.500v7l4-3.500z" fill="#111"/></svg>
<div class="rh" style="top:296px;height:10px;line-height:13px;background:#3c3c3c;"><span style="position:relative;top:3px">1</span></div>
<div class="rh" style="top:306px;height:20px;line-height:19px">2</div>
<div class="rh" style="top:326px;height:20px;line-height:19px">3</div>
<div class="rh" style="top:346px;height:20px;line-height:19px">4</div>
<div class="rh" style="top:366px;height:20px;line-height:19px">5</div>
<div class="rh" style="top:386px;height:2px;line-height:1px"></div>
<div class="rh" style="top:388px;height:21px;line-height:20px">7</div>
<div class="rh" style="top:409px;height:10px;line-height:13px;"><span style="position:relative;top:2px">8</span></div>
<div class="rh" style="top:419px;height:21px;line-height:20px">9</div>
<div class="rh" style="top:440px;height:20px;line-height:19px">10</div>
<div class="rh" style="top:460px;height:20px;line-height:19px">11</div>
<div class="rh" style="top:480px;height:21px;line-height:20px">12</div>
<div class="abs" style="left:39px;top:501px;width:46px;height:4px;background:#b4b4b4"></div>
<div class="abs" style="left:85px;top:272px;width:12px;height:23px;background:#3c3c3c;color:#fff;font-size:10px;font-weight:bold;line-height:23px;text-align:center">A</div>
<div class="abs" style="left:84px;top:295px;width:14px;height:11px;border:2px solid #4a7df0;background:#fff"></div>
<div class="rh" style="top:505px;height:20px;line-height:21px">13</div>
<div class="rh" style="top:525px;height:20px;line-height:21px">14</div>
<div class="rh" style="top:545px;height:20px;line-height:21px">15</div>
<div class="rh" style="top:565px;height:20px;line-height:21px">16</div>
<div class="rh" style="top:585px;height:20px;line-height:21px">17</div>
<div class="rh" style="top:605px;height:20px;line-height:21px">18</div>
<div class="rh" style="top:625px;height:20px;line-height:21px">19</div>
<div class="rh" style="top:645px;height:20px;line-height:21px">20</div>
<div class="rh" style="top:665px;height:21px;line-height:22px">21</div>
<div class="rh" style="top:686px;height:21px;line-height:22px">22</div>
<div class="rh" style="top:707px;height:19px;line-height:23px">23</div>
<!-- scrollbars -->
<div class="abs" style="left:1106px;top:272px;width:13px;height:454px;background:#f4f4f4;border-left:1px solid #e0e0e0"></div>
<div class="abs" style="left:1107px;top:501px;width:12px;height:4px;background:#e4e6ec"></div>
<div class="abs" style="left:1108px;top:506px;width:9px;height:26px;background:#c1c1c1"></div>
<div class="abs" style="left:1107px;top:696px;width:12px;height:15px;background:#f4f4f4;border:1px solid #dcdcdc"></div>
<div class="abs" style="left:1107px;top:711px;width:12px;height:15px;background:#f4f4f4;border:1px solid #dcdcdc"></div>
<svg style="left:1107px;top:696px" width="12" height="30" viewBox="0 0 12 30"><path d="M3.500 9l2.500-3 2.500 3z" fill="#9a9a9a"/><path d="M3.500 21l2.500 3 2.500-3z" fill="#9a9a9a"/></svg>
<div id="hscroll">
 <div class="abs" style="left:0;top:0;width:1080px;height:1px;background:#e3e3e3"></div>
 <div class="abs" style="left:848px;top:0;width:4px;height:12px;background:#e4e6ec"></div>
 <div class="abs" style="left:853px;top:2px;width:17px;height:8px;background:#c1c1c1"></div>
 <div class="abs" style="left:1035px;top:0;width:17px;height:12px;border:1px solid #dcdcdc;background:#f6f6f6"></div>
 <div class="abs" style="left:1051px;top:0;width:17px;height:12px;border:1px solid #dcdcdc;background:#f6f6f6"></div>
 <svg style="left:1035px;top:0" width="33" height="12" viewBox="0 0 33 12"><path d="M10 3v6l-3.500-3z" fill="#777"/><path d="M23 3v6l3.500-3z" fill="#777"/></svg>
</div>
<!-- bottom bar -->
<div id="bottom"></div>
<svg style="left:89px;top:750px" width="12" height="12" viewBox="0 0 12 12"><path d="M0 1h12M0 4.200h12M0 7.400h12M0 10.600h12" stroke="#666" stroke-width="1.600"/></svg>
<div id="sheettab"><span style="position:absolute;left:6px;top:0">Ризультатэ рейдафф</span></div>
<svg style="left:266px;top:749px" width="10" height="6" viewBox="0 0 10 6"><path d="M1 .500l4 4.500 4-4.500z" fill="#aaa"/></svg>
<svg style="left:1078px;top:746px" width="22" height="24" viewBox="0 0 22 24">
 <path d="M3.500 2h15a1.500 1.500 0 0 1 1.500 1.500v15a1.500 1.500 0 0 1-1.500 1.500h-4.500l-3 2.500-3-2.500h-4.500a1.500 1.500 0 0 1-1.500-1.500v-15a1.500 1.500 0 0 1 1.500-1.500z" fill="#5a5a5a"/>
 <path d="M11 5.500l1.600 3.900 3.900 1.600-3.900 1.600-1.600 3.900-1.600-3.900-3.900-1.600 3.900-1.600z" fill="#fff"/>
</svg>
<div id="winb"></div>
<div id="winr"></div>

<!-- dropdown menu -->
<div id="dd">
 <div class="mi" style="top:11px">Создать новый временный фильтр</div>
 <div class="mi" style="top:38px">Действия</div>
 <svg style="left:244px;top:43px" width="8" height="8" viewBox="0 0 8 8"><path d="M1.500 .500l5 3.500-5 3.500z" fill="#777"/></svg>
 <div class="abs" style="left:0;top:66px;width:263px;height:1px;background:#e5e5e5"></div>
 <div class="mi" style="top:78px">Не выбрано</div>
 <div class="abs" style="left:0;top:102px;width:262px;height:26px;background:#eee"></div>
 <div class="mi" style="top:105px">Новые записи сверху</div>
 <svg style="left:7px;top:107px" width="14" height="12" viewBox="0 0 14 12"><path d="M1.500 6.500l3.500 3.500 7.500-8.500" stroke="#555" stroke-width="1.800" fill="none"/></svg>
 <div class="abs" style="left:0;top:134px;width:263px;height:1px;background:#e5e5e5"></div>
 <div class="mi" style="top:145px">Подробнее…</div>
</div>

<!-- green hand-drawn annotation -->
<svg style="left:0;top:0" width="1119" height="778" viewBox="0 0 1119 778" fill="none" stroke="#22b14c" stroke-linecap="round" stroke-linejoin="round">
 <ellipse cx="106" cy="191.600" rx="33.300" ry="23.900" stroke-width="5.200"/>
 <path d="M105.600 221.700l24 67.500" stroke-width="5"/>
 <path d="M109.500 261.500l20.500 28.500 2.500-34" stroke-width="5"/>
 <path d="M94 302C150 300.500 260 300 350 301.500c8 .500 11.500 4.500 11.500 14.500s-2.500 13.500-10.500 14.500C280 335.500 170 336 96 333.500c-9-.500-12-5.500-12-16 0-9.500 2-15 10-15.500z" stroke-width="5"/>
</svg>

</body></html>
